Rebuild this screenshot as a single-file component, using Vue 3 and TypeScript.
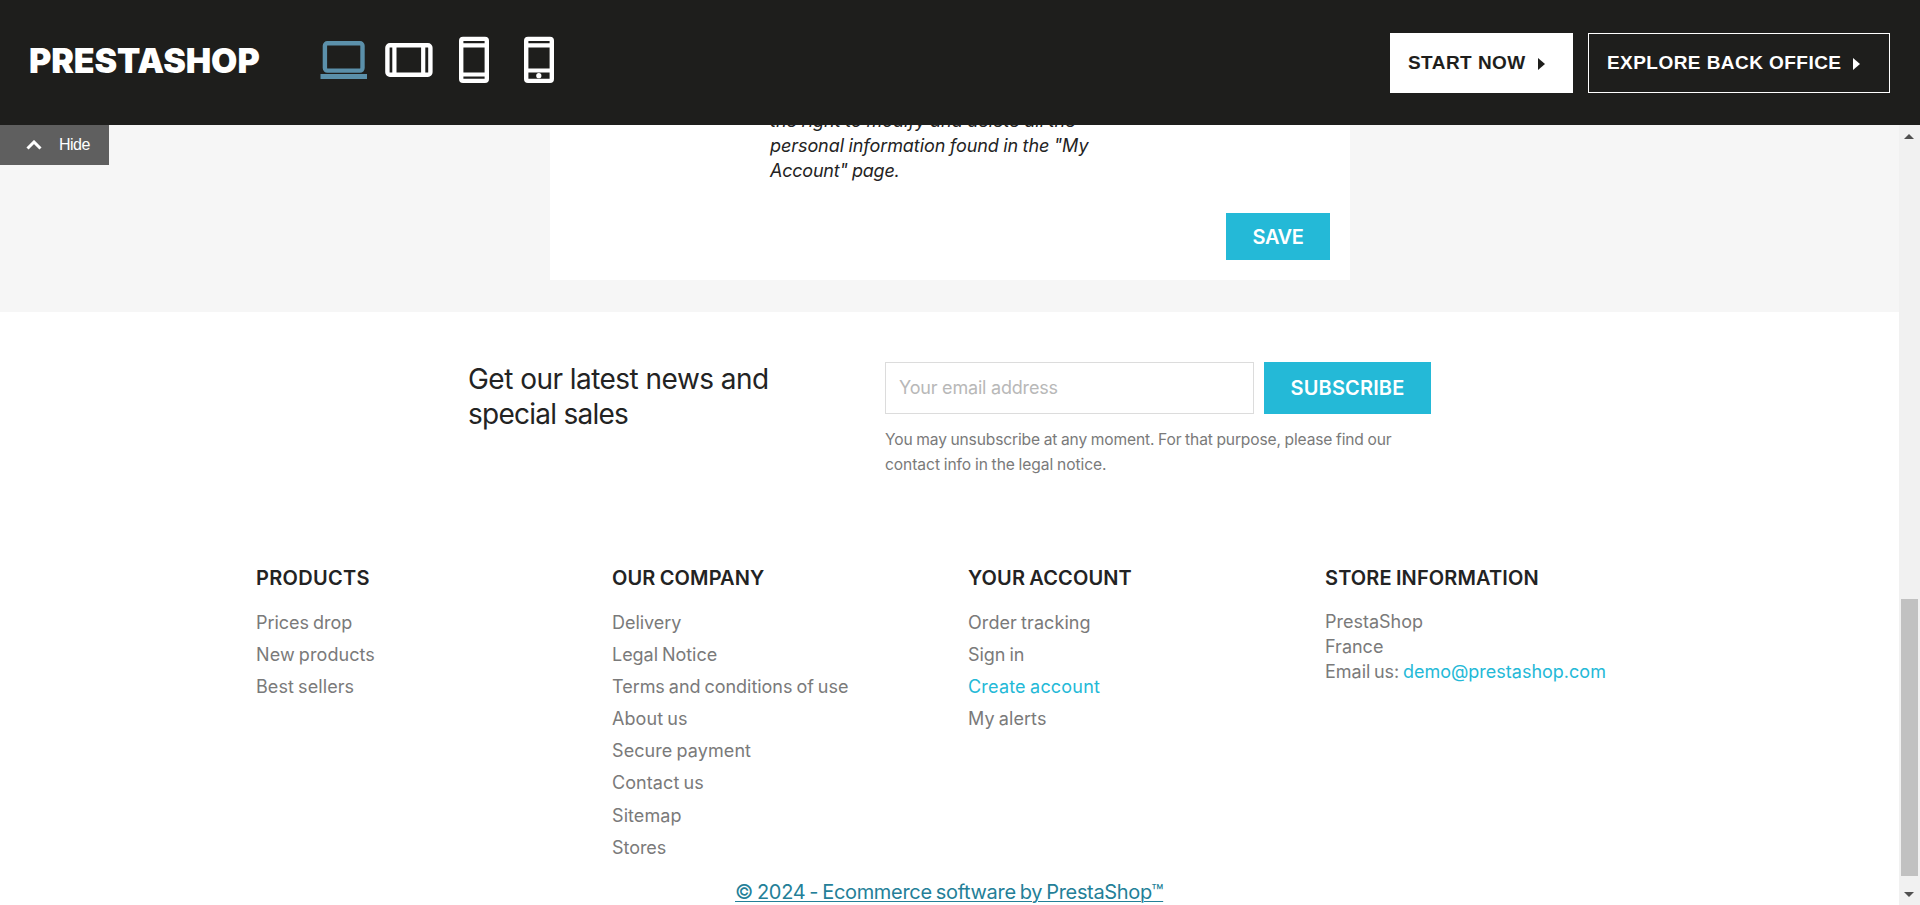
<script setup lang="ts">
interface FooterLink { label: string; current?: boolean; tight?: boolean }
interface FooterGroup { key: string; title: string; links: FooterLink[] }

const groups: FooterGroup[] = [
  {
    key: 'products',
    title: 'PRODUCTS',
    links: [{ label: 'Prices drop', tight: true }, { label: 'New products' }, { label: 'Best sellers' }],
  },
  {
    key: 'company',
    title: 'OUR COMPANY',
    links: [
      { label: 'Delivery', tight: true },
      { label: 'Legal Notice', tight: true },
      { label: 'Terms and conditions of use', tight: true },
      { label: 'About us' },
      { label: 'Secure payment' },
      { label: 'Contact us' },
      { label: 'Sitemap' },
      { label: 'Stores', tight: true },
    ],
  },
  {
    key: 'account',
    title: 'YOUR ACCOUNT',
    links: [
      { label: 'Order tracking' },
      { label: 'Sign in', tight: true },
      { label: 'Create account', current: true },
      { label: 'My alerts' },
    ],
  },
]
</script>

<template>
  <div class="page">
    <header class="topbar">
      <div class="brand">PRESTASHOP</div>
      <nav class="devices">
        <svg class="laptop" viewBox="0 0 47 48" width="47" height="48">
          <rect x="4.9" y="7.2" width="37.6" height="27.4" rx="2.5" fill="none" stroke="currentColor" stroke-width="4.4" />
          <rect x="0.5" y="38" width="46.5" height="5" fill="currentColor" />
        </svg>
        <svg viewBox="0 0 47 48" width="47" height="48">
          <rect x="2.4" y="9.2" width="43" height="29.6" rx="2.5" fill="none" stroke="currentColor" stroke-width="4.4" />
          <path d="M9.4 9V39M38.2 9V39" stroke="currentColor" stroke-width="4.2" />
        </svg>
        <svg viewBox="0 0 30 48" width="30" height="48">
          <rect x="2.2" y="2.9" width="25.6" height="42" rx="1.8" fill="none" stroke="currentColor" stroke-width="4.4" />
          <path d="M3 9.4H27M3 38.5H27" stroke="currentColor" stroke-width="4.2" />
        </svg>
        <svg viewBox="0 0 30 48" width="30" height="48">
          <rect x="2.2" y="2.9" width="25.6" height="42" rx="1.8" fill="none" stroke="currentColor" stroke-width="4.4" />
          <path d="M3 9.4H27M3 34.5H27" stroke="currentColor" stroke-width="4.2" />
          <circle cx="14.8" cy="39.7" r="2.6" fill="currentColor" />
        </svg>
      </nav>
      <div class="actions">
        <a class="cta solid"><span>START NOW</span><i class="caret"></i></a>
        <a class="cta"><span>EXPLORE BACK OFFICE</span><i class="caret"></i></a>
      </div>
    </header>

    <div class="frame">
      <div class="content">
        <section class="wrapper">
          <div class="card">
            <p class="notice">
              <span class="n1">the right to modify and delete all the</span>
              <span class="n2">personal information found in the "My</span>
              <span class="n3">Account" page.</span>
            </p>
            <button class="btn save"><span>SAVE</span></button>
          </div>
        </section>

        <section class="newsletter">
          <h2><span>Get our latest news and</span><span class="second">special sales</span></h2>
          <div class="signup">
            <div class="row">
              <div class="field"><span>Your email address</span></div>
              <button class="btn subscribe"><span>SUBSCRIBE</span></button>
            </div>
            <p><span>You may unsubscribe at any moment. For that purpose, please find our</span><span class="last">contact info in the legal notice.</span></p>
          </div>
        </section>

        <footer class="links">
          <div v-for="g in groups" :key="g.key" class="group" :class="g.key">
            <h3>{{ g.title }}</h3>
            <ul>
              <li v-for="l in g.links" :key="l.label" :class="{ current: l.current, tight: l.tight }">{{ l.label }}</li>
            </ul>
          </div>
          <div class="group store">
            <h3>STORE INFORMATION</h3>
            <address>
              <div>PrestaShop</div>
              <div>France</div>
              <div>Email us: <a>demo@prestashop.com</a></div>
            </address>
          </div>
        </footer>

        <p class="copyright"><a>© 2024 - Ecommerce software by PrestaShop™</a></p>
      </div>

      <div class="scrollbar">
        <svg class="up" viewBox="0 0 10 5" width="10" height="5"><path d="M0 5L5 0L10 5Z" /></svg>
        <div class="thumb"></div>
        <svg class="down" viewBox="0 0 10 5" width="10" height="5"><path d="M0 0H10L5 5Z" /></svg>
      </div>

      <div class="hide">
        <svg viewBox="0 0 16 10" width="16" height="10"><path d="M1.5 8.5L8 2L14.5 8.5" fill="none" stroke="currentColor" stroke-width="3" /></svg>
        <span>Hide</span>
      </div>
    </div>
  </div>
</template>

<style>
body { margin: 0; overflow: hidden; }
</style>

<style scoped>
* { box-sizing: border-box; }
.page { width: 1920px; height: 905px; display: flex; flex-direction: column; overflow: hidden; background: #fff; color: #232323; font-family: Inter, "Liberation Sans", sans-serif; }
p, h2, h3, ul { margin: 0; padding: 0; font-weight: 400; }
button { border: 0; padding: 0; font-family: inherit; }
.topbar { height: 125px; flex: none; background: #1e1e1c; display: flex; align-items: flex-start; color: #fff; }
.brand { margin: 39px 0 0 29px; width: 291px; height: 44px; line-height: 44px; font-size: 34px; font-weight: 900; letter-spacing: -0.1px; white-space: nowrap; }
.devices { display: flex; margin-top: 36px; width: 234px; }
.devices svg { overflow: visible; }
.devices svg:nth-child(2) { margin-left: 18px; }
.devices svg:nth-child(3) { margin-left: 27px; }
.devices svg:nth-child(4) { margin-left: 35px; }
.laptop { color: #5b90aa; }
.actions { margin: 33px 30px 0 auto; display: flex; gap: 15px; }
.cta { height: 60px; width: 302px; border: 1px solid #fff; display: flex; align-items: center; padding-left: 18px; font: 700 19px/58px "Liberation Sans", sans-serif; letter-spacing: 0.45px; white-space: nowrap; }
.cta.solid { width: 183px; background: #fff; color: #1e1e1c; padding-left: 17px; }
.caret { margin-left: 12px; margin-top: 1px; border-left: 7px solid currentColor; border-top: 6px solid transparent; border-bottom: 6px solid transparent; }
.frame { position: relative; flex: 1; display: flex; min-height: 0; }
.content { width: 1899px; flex: none; height: 780px; overflow: hidden; }
.wrapper { height: 187px; background: #f6f6f6; display: flex; justify-content: center; }
.card { width: 800px; height: 155px; margin-left: 1px; background: #fff; display: flex; flex-direction: column; padding-right: 20px; }
.notice { margin: -17px 0 0 220px; height: 105px; font-size: 18px; font-style: italic; line-height: 25px; white-space: nowrap; word-spacing: -0.5px; }
.notice span { display: block; width: fit-content; }
.n1 { letter-spacing: 0.02px; }
.n2 { letter-spacing: -0.07px; }
.n3 { letter-spacing: -0.22px; }
.btn { background: #24b9d7; color: #fff; font-size: 20px; font-weight: 600; display: flex; align-items: center; justify-content: center; white-space: nowrap; }
.save { width: 104px; height: 47px; align-self: flex-end; letter-spacing: -0.35px; }
.newsletter { height: 251px; padding: 50px 0 0 468px; display: flex; }
.newsletter h2 { width: 417px; font-size: 28px; line-height: 35px; letter-spacing: -0.53px; white-space: nowrap; }
.newsletter h2 span, .signup p span { display: block; width: fit-content; }
.newsletter h2 .second { letter-spacing: -0.75px; }
.row { display: flex; gap: 10px; }
.field { width: 369px; height: 52px; border: 1px solid #dcdcdc; padding-left: 13px; font-size: 18px; line-height: 50px; color: #b8b8b8; white-space: nowrap; letter-spacing: -0.2px; }
.subscribe { width: 167px; height: 52px; letter-spacing: 0.15px; }
.signup p { margin-top: 13px; font-size: 15.6px; line-height: 25px; color: #7a7a7a; letter-spacing: -0.15px; word-spacing: -0.5px; white-space: nowrap; }
.signup p .last { letter-spacing: -0.07px; }
.links { display: grid; grid-template-columns: repeat(4, 356px); margin-left: 256px; height: 299px; }
h3 { font-size: 20px; font-weight: 600; line-height: 30px; letter-spacing: 0.13px; word-spacing: -1px; white-space: nowrap; }
.products h3 { letter-spacing: 0.3px; }
ul { list-style: none; margin-top: 14px; }
li { height: 32.1px; line-height: 32px; font-size: 18px; color: #7a7a7a; letter-spacing: 0.08px; word-spacing: -1px; white-space: nowrap; width: fit-content; }
li.tight { letter-spacing: -0.04px; }
li.current, address a { color: #24b9d7; }
li.current { letter-spacing: 0.2px; }
.store { padding-left: 1px; }
address { font-style: normal; margin-top: 16px; font-size: 18px; line-height: 25px; color: #7a7a7a; letter-spacing: 0; word-spacing: -1.5px; white-space: nowrap; }
address div { width: fit-content; }
.copyright { margin: 14px 0 0 735px; font-size: 20px; line-height: 32px; color: #247f98; white-space: nowrap; letter-spacing: -0.32px; word-spacing: -1.3px; }
.copyright a { text-decoration: underline; text-decoration-thickness: 1px; text-underline-offset: 2px; }
.scrollbar { width: 21px; background: #f1f1f1; display: flex; flex-direction: column; padding: 9px 0 8px; fill: #505050; }
.up, .down { margin-left: 5px; flex: none; }
.thumb { width: 17px; height: 277px; margin: 460px 0 16px 2px; background: #c1c1c1; }
.hide { position: absolute; left: 0; top: 0; width: 109px; height: 40px; background: #5f5f5f; color: #fff; display: flex; align-items: center; padding-left: 26px; gap: 17px; font: 16px "Liberation Sans", sans-serif; letter-spacing: -0.5px; }
</style>
